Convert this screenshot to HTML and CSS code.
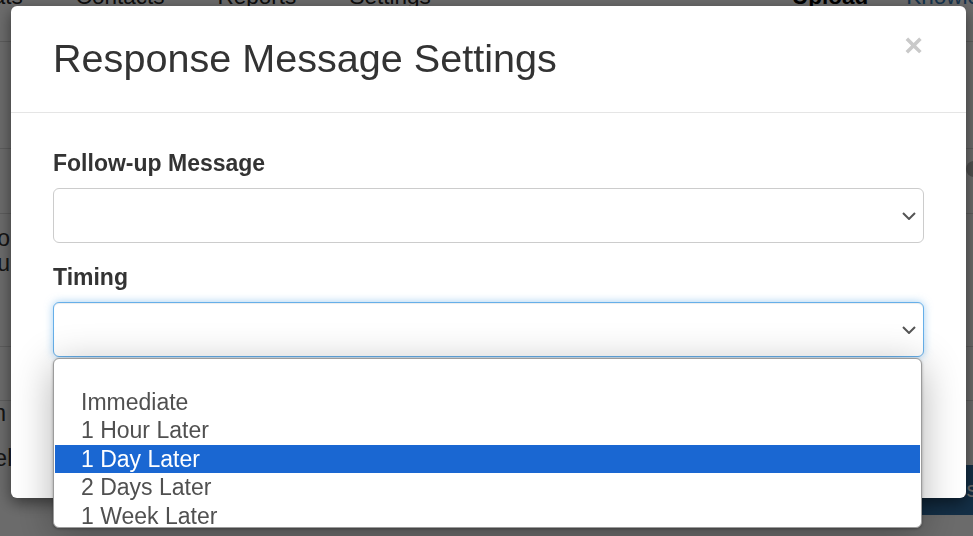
FILE: index.html
```html
<!DOCTYPE html>
<html lang="en">
<head>
<meta charset="utf-8">
<title>Response Message Settings</title>
<link rel="stylesheet" href="styles.css">
</head>
<body>
<div class="page">
  <nav class="topnav">
    <div class="nav-left">
      <span class="nav-item first">Chats</span>
      <span class="nav-item">Contacts</span>
      <span class="nav-item">Reports</span>
      <span class="nav-item">Settings</span>
    </div>
    <div class="nav-right">
      <span class="nav-item upload">Upload</span>
      <span class="nav-item knowledge">Knowledge</span>
    </div>
  </nav>
  <div class="row row-a"></div>
  <div class="row row-b"><span class="toggle"></span></div>
  <div class="row row-c">
    <div class="snip">Info</div>
    <div class="snip">You</div>
  </div>
  <div class="row row-d"></div>
  <div class="row row-e">
    <div class="left-snips">
      <div class="snip">Main</div>
      <div class="snip">Label</div>
    </div>
    <div class="page-btn">Messages</div>
  </div>
</div>

<div class="backdrop"></div>

<div class="modal">
  <div class="modal-header">
    <h4 class="modal-title">Response Message Settings</h4>
    <button class="close" type="button">×</button>
  </div>
  <div class="modal-body">
    <div class="form-group">
      <label class="form-label">Follow-up Message</label>
      <div class="select">
        <svg class="chev" width="14" height="8" viewBox="0 0 14 8"><polyline points="1,1 7,7 13,1" fill="none" stroke="#555" stroke-width="2"/></svg>
      </div>
    </div>
    <div class="form-group">
      <label class="form-label">Timing</label>
      <div class="select focused">
        <svg class="chev" width="14" height="8" viewBox="0 0 14 8"><polyline points="1,1 7,7 13,1" fill="none" stroke="#555" stroke-width="2"/></svg>
        <ul class="dropdown">
          <li class="opt"></li>
          <li class="opt">Immediate</li>
          <li class="opt">1 Hour Later</li>
          <li class="opt selected">1 Day Later</li>
          <li class="opt">2 Days Later</li>
          <li class="opt">1 Week Later</li>
        </ul>
      </div>
    </div>
    <div class="modal-actions">
      <button class="btn-save" type="button">Save</button>
    </div>
  </div>
</div>
</body>
</html>
```

FILE: styles.css
```css
html, body {
  margin: 0;
  padding: 0;
}

body {
  width: 973px;
  height: 536px;
  overflow: hidden;
  position: relative;
  background: #ffffff;
  color: #333333;
  font-family: "Liberation Sans", Arial, sans-serif;
}

/* ---------- background page ---------- */
.page {
  width: 973px;
}

.topnav {
  display: flex;
  height: 64px;
  margin-top: -23px;
  border-bottom: 1px solid #d9d9d9;
  font-size: 22.5px;
  line-height: 40px;
  white-space: nowrap;
}

.nav-left {
  display: flex;
  gap: 53px;
  margin-left: -36px;
}

.nav-right {
  display: flex;
  gap: 38px;
  margin-left: auto;
  width: 181px;
}

.nav-item {
  color: #222222;
}

.upload {
  font-weight: bold;
  color: #000000;
}

.knowledge {
  color: #337ab7;
}

.row {
  border-bottom: 1px solid #dcdcdc;
  position: relative;
}

.row-a { height: 106px; }

.row-b {
  height: 64px;
  display: flex;
  justify-content: flex-end;
  align-items: center;
}

.toggle {
  width: 16px;
  height: 16px;
  border-radius: 50%;
  background: #bbbbbb;
  margin-right: -9px;
  margin-top: -24px;
}

.row-c {
  height: 133px;
  padding-top: 12px;
  box-sizing: border-box;
}

.snip {
  font-size: 23px;
  line-height: 25px;
  color: #333333;
  width: 50px;
  margin-left: -40px;
  text-align: right;
}

.row-d { height: 53px; }

.row-e {
  height: 140px;
  display: flex;
  justify-content: space-between;
  align-items: flex-start;
}

.left-snips {
  padding-top: 0;
  display: flex;
  flex-direction: column;
  gap: 20px;
}

.left-snips .snip {
  margin-left: -44px;
}

.page-btn {
  margin-top: 64px;
  width: 120px;
  height: 50px;
  margin-right: -60px;
  background: #2f6fa6;
  color: #ffffff;
  font-size: 22px;
  line-height: 50px;
  padding-left: 12px;
  box-sizing: border-box;
  border-radius: 4px;
}

/* ---------- backdrop ---------- */
.backdrop {
  position: fixed;
  inset: 0;
  background: rgba(0, 0, 0, 0.58);
}

/* ---------- modal ---------- */
.modal {
  position: fixed;
  left: 11px;
  top: 6px;
  width: 955px;
  height: 492px;
  background: #ffffff;
  border-radius: 6px;
  box-shadow: 0 5px 15px rgba(0, 0, 0, 0.5);
}

.modal-header {
  display: flex;
  justify-content: space-between;
  align-items: flex-start;
  padding: 33px 43px 34px 42px;
  border-bottom: 1px solid #e5e5e5;
}

.modal-title {
  margin: 0;
  font-size: 39.6px;
  font-weight: normal;
  line-height: 39px;
  color: #333333;
}

.close {
  margin-top: -10px;
  padding: 0;
  border: 0;
  background: none;
  font-family: "Liberation Sans", Arial, sans-serif;
  font-size: 32px;
  font-weight: bold;
  line-height: 32px;
  color: #c9c9c9;
}

.modal-body {
  padding: 38px 42px 0 42px;
}

.form-group {
  margin-bottom: 22px;
}

.form-label {
  display: block;
  font-size: 23px;
  font-weight: bold;
  line-height: 24px;
  margin-bottom: 13px;
  color: #333333;
}

.select {
  position: relative;
  height: 55px;
  box-sizing: border-box;
  border: 1px solid #cccccc;
  border-radius: 6px;
  display: flex;
  align-items: center;
  justify-content: flex-end;
  padding-right: 7px;
  background: #ffffff;
}

.select.focused {
  border-color: #66afe9;
  box-shadow: inset 0 1px 1px rgba(0, 0, 0, 0.075), 0 0 8px rgba(102, 175, 233, 0.6);
}

.chev {
  display: block;
}

.dropdown {
  position: absolute;
  left: -1px;
  top: 55px;
  width: 869px;
  height: 170px;
  box-sizing: border-box;
  margin: 0;
  padding: 0 1px;
  list-style: none;
  background: #ffffff;
  border: 1px solid #9c9c9c;
  border-radius: 6px;
  overflow: hidden;
  box-shadow: 0 8px 40px rgba(0, 0, 0, 0.3), 0 1px 3px rgba(0, 0, 0, 0.3);
  z-index: 2;
}

.opt {
  height: 28.5px;
  line-height: 28.5px;
  padding-left: 26px;
  font-size: 23px;
  color: #505050;
  white-space: nowrap;
}

.opt.selected {
  background: #1a67d2;
  color: #ffffff;
}

.modal-actions {
  padding-top: 29px;
}

.btn-save {
  width: 110px;
  height: 44px;
  border: 1px solid #4cae4c;
  border-radius: 4px;
  background: #5cb85c;
  color: #ffffff;
  font-family: "Liberation Sans", Arial, sans-serif;
  font-size: 20px;
}
```
